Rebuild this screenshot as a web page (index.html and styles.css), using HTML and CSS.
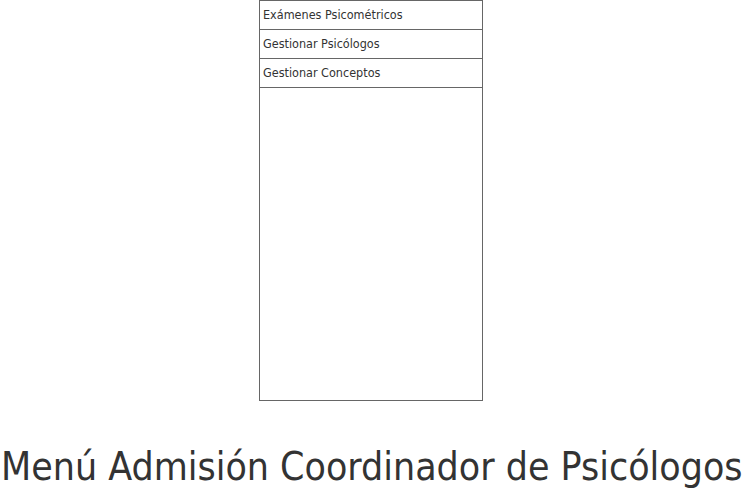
FILE: index.html
```html
<!DOCTYPE html>
<html>
<head>
<meta charset="utf-8">
<link rel="stylesheet" href="styles.css">
</head>
<body>
<div class="page">
  <nav class="menu">
    <div class="item">Exámenes Psicométricos</div>
    <div class="item">Gestionar Psicólogos</div>
    <div class="item">Gestionar Conceptos</div>
  </nav>
  <h1 class="title">Menú Admisión Coordinador de Psicólogos</h1>
</div>
</body>
</html>
```
FILE: styles.css
```css
html, body {
  margin: 0;
  padding: 0;
  background: #fff;
}
.page {
  width: 742px;
  display: flex;
  flex-direction: column;
  align-items: center;
}
.menu {
  box-sizing: border-box;
  width: 224px;
  height: 401px;
  border: 1px solid #666;
  border-top: none;
}
.item {
  height: 28px;
  border-top: 1px solid #666;
  font-family: "DejaVu Sans Condensed", "DejaVu Sans", sans-serif;
  font-stretch: condensed;
  font-size: 12.5px;
  line-height: 28px;
  padding-left: 3px;
  color: #333;
}
.item:last-child { border-bottom: 1px solid #666; }
.title {
  margin: 42px 0 0;
  font-family: "DejaVu Sans Condensed", "DejaVu Sans", sans-serif;
  font-stretch: condensed;
  font-weight: normal;
  font-size: 38.9px;
  color: #333;
  white-space: nowrap;
  line-height: 48px;
  align-self: flex-start;
  padding-left: 1px;
}
```
